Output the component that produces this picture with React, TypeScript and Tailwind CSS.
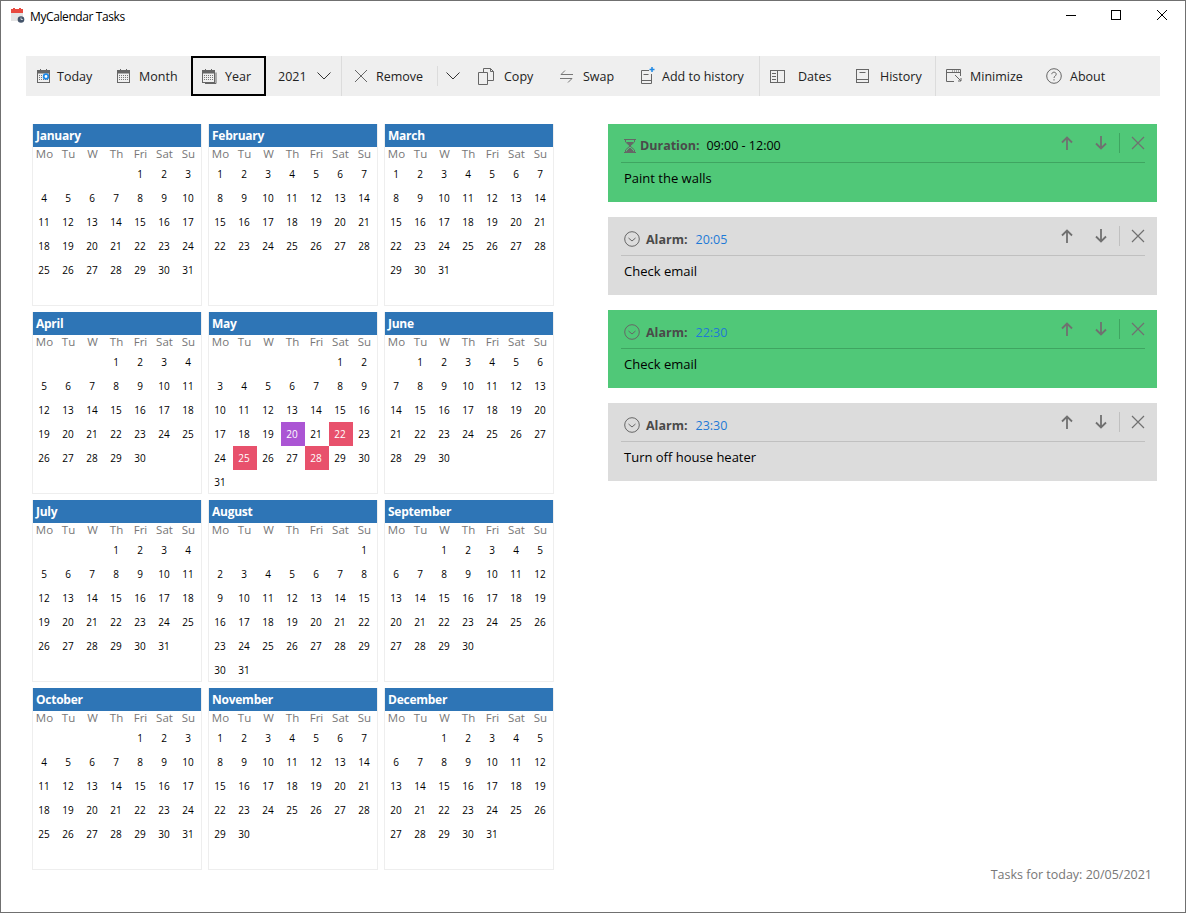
import React from 'react';

const monthsData: [string, number, number][] = [
  ['January', 4, 31], ['February', 0, 28], ['March', 0, 31],
  ['April', 3, 30], ['May', 5, 31], ['June', 1, 30],
  ['July', 3, 31], ['August', 6, 31], ['September', 2, 30],
  ['October', 4, 31], ['November', 0, 30], ['December', 2, 31],
];
const weekdays = ['Mo', 'Tu', 'W', 'Th', 'Fri', 'Sat', 'Su'];

const MonthCard: React.FC<{ name: string; offset: number; days: number }> = ({ name, offset, days }) => {
  const cells: (number | null)[] = [...Array(offset).fill(null), ...Array.from({ length: days }, (_, i) => i + 1)];
  return (
    <div className="w-[170px] h-[182px] border-x border-b border-[#eeeeee] overflow-hidden">
      <div className="h-[23px] bg-[#2e75b6] text-white font-bold text-[12px] tracking-[-0.25px] leading-[24px] pl-[3px]">{name}</div>
      <div className="grid grid-cols-[repeat(7,24px)] h-[15px]">
        {weekdays.map((w) => (
          <div key={w} className="text-center pr-[1px] text-[11.5px] leading-[14px] text-[#777777]">{w}</div>
        ))}
      </div>
      <div className="grid grid-cols-[repeat(7,24px)] auto-rows-[24px]">
        {cells.map((d, i) => {
          let color = 'text-black';
          if (name === 'May' && d === 20) color = 'bg-[#ab55d4] text-white';
          if (name === 'May' && (d === 22 || d === 25 || d === 28)) color = 'bg-[#e8516c] text-white';
          return (
            <div key={i} className={`text-center pr-[2px] text-[10px] leading-[24px] ${color}`}>{d}</div>
          );
        })}
      </div>
    </div>
  );
};

const CalIcon: React.FC<{ kind: 'today' | 'month' | 'year' }> = ({ kind }) => (
  <svg width="16" height="16" viewBox="0 0 16 16" fill="none" stroke="#666" className="shrink-0">
    <rect x="1.5" y="2.5" width="12" height="12" />
    <path d="M1.5 4h12" strokeWidth="3" />
    <path d="M4.5 1v2M10.5 1v2" />
    <path d="M3 7.5h9M3 9.5h9M3 11.5h9" stroke="#777" strokeDasharray="1 1" />
    {kind === 'year' && <path d="M15 4.5v11H4" />}
    {kind === 'today' && <circle cx="10" cy="8.5" r="2.3" stroke="#1e88e5" strokeWidth="1.8" fill="#fff" />}
  </svg>
);

const Chevron = () => (
  <svg width="14" height="8" viewBox="0 0 14 8" fill="none" stroke="#333" className="shrink-0">
    <path d="M.5.5 7 7l6.5-6.5" />
  </svg>
);

const Item: React.FC<{ className: string; icon?: React.ReactNode; label: string; gap: string }> = ({ className, icon, label, gap }) => (
  <div className={`flex items-center h-full ${className}`}>
    {icon}
    <span className={`pt-[2px] ${gap}`}>{label}</span>
  </div>
);

const Divider = () => <div className="w-px h-full bg-[#dcdcdc] shrink-0" />;

const TaskCard: React.FC<{ green?: boolean; kind: 'Duration:' | 'Alarm:'; time: string; text: string }> = ({ green, kind, time, text }) => (
  <div className={`h-[78px] pl-[13px] pr-[12px] pt-[9px] ${green ? 'bg-[#50c878]' : 'bg-[#dcdcdc]'}`}>
    <div className={`h-[30px] pb-[2px] flex items-center border-b ${green ? 'border-[#3fa561]' : 'border-[#c0c0c0]'}`}>
      {kind === 'Duration:' ? (
        <svg width="12" height="14" viewBox="0 0 12 14" fill="none" stroke="#666" className="ml-[3px] mb-[2px]">
          <path d="M0 .5h12M0 13.5h12M1.5 1v2L6 7l-4.5 4v2M10.5 1v2L6 7l4.5 4v2" />
          <path d="M2.5 12.5 6 9l3.5 3.5zM3 3.5h6L6 6.500z" fill="#666" />
        </svg>
      ) : (
        <svg width="16" height="16" viewBox="0 0 16 16" fill="none" stroke="#666" className="ml-[3px] mb-[2px]">
          <circle cx="8" cy="8" r="7.3" />
          <path d="M4.5 7 8 10l3.5-3" />
        </svg>
      )}
      <span className={`font-bold text-[#4a4a4a] text-[12.5px] ${kind === 'Duration:' ? 'ml-[4px]' : 'ml-[6px] pt-[2px]'}`}>{kind}</span>
      <span className={`text-[12.5px] ${kind === 'Duration:' ? 'ml-[7px] text-black' : 'ml-[8px] pt-[2px] text-[#1e7ad6]'}`}>{time}</span>
      <div className="ml-auto self-start flex items-center h-[20px] text-[#707070]">
        <svg width="12" height="14" viewBox="0 0 12 14" fill="none" stroke="currentColor" strokeWidth="1.8">
          <path d="M6 14V1.5M1 6.5l5-5 5 5" />
        </svg>
        <svg width="12" height="14" viewBox="0 0 12 14" fill="none" stroke="currentColor" strokeWidth="1.8" className="ml-[22px]">
          <path d="M6 0v12.5M1 7.5l5 5 5-5" />
        </svg>
        <div className={`w-px h-[20px] ml-[12px] ${green ? 'bg-[#3fa561]' : 'bg-[#c0c0c0]'}`} />
        <svg width="14" height="14" viewBox="0 0 14 14" fill="none" stroke="currentColor" strokeWidth="1.2" className="ml-[11px]">
          <path d="M1 1l12 12M13 1 1 13" />
        </svg>
      </div>
    </div>
    <div className="pl-[3px] mt-[5px] text-[13px] leading-[20px] text-black">{text}</div>
  </div>
);

export default function App() {
  return (
    <div className="w-[1186px] h-[913px] border border-[#707070] bg-white text-[12.5px] text-[#222] flex flex-col overflow-hidden" style={{ fontFamily: '"Open Sans", sans-serif' }}>
      {/* title bar */}
      <div className="h-[55px] shrink-0 flex items-start">
        <svg width="14" height="16" viewBox="0 0 14 16" className="ml-[10px] mt-[6px] shrink-0">
          <rect x="0" y="6" width="12" height="8" fill="#e4e4e4" />
          <rect x="0" y="2" width="12" height="4" fill="#e8493f" />
          <path d="M2 1h2v2H2zM8 1h2v2H8z" fill="#e8493f" />
          <circle cx="10" cy="12.5" r="3.3" fill="#44546a" />
          <path d="M10 10.5v2h1.8" stroke="#fff" strokeWidth=".7" fill="none" />
        </svg>
        <span className="ml-[5px] mt-[7px] text-[12px] tracking-[-0.4px] leading-[18px] text-black">MyCalendar Tasks</span>
        <div className="ml-auto flex items-start mt-[9px] mr-[18px]">
          <div className="w-[10px] h-px bg-black mt-[5px]" />
          <div className="w-[10px] h-[10px] border border-black ml-[35px]" />
          <svg width="10" height="10" viewBox="0 0 10 10" stroke="#000" className="ml-[36px]">
            <path d="M0 0l10 10M10 0 0 10" />
          </svg>
        </div>
      </div>

      {/* toolbar */}
      <div className="h-[40px] shrink-0 ml-[25px] mr-[25px] bg-[#efefef] flex items-center">
        <Item className="w-[80px] pl-[10px]" icon={<CalIcon kind="today" />} gap="ml-[5px]" label="Today" />
        <Item className="w-[85px] pl-[10px]" icon={<CalIcon kind="month" />} gap="ml-[7px]" label="Month" />
        <Item className="w-[75px] pl-[8px] border-2 border-black" icon={<CalIcon kind="year" />} gap="ml-[8px]" label="Year" />
        <div className="w-[75px] h-full flex items-center pl-[12px]">
          <span className="pt-[2px]">2021</span>
          <span className="ml-[10px]"><Chevron /></span>
        </div>
        <Divider />
        <Item
          className="w-[95px] pl-[12px]"
          icon={
            <svg width="14" height="14" viewBox="0 0 14 14" fill="none" stroke="#666">
              <path d="M1 1l12 12M13 1 1 13" />
            </svg>
          }
          gap="ml-[8px]"
          label="Remove"
        />
        <div className="w-px h-[20px] bg-[#dcdcdc] shrink-0" />
        <div className="w-[39px] h-full flex items-center pl-[8px]">
          <Chevron />
        </div>
        <Item
          className="w-[83px]"
          icon={
            <svg width="18" height="18" viewBox="0 0 18 18" fill="none" stroke="#666">
              <path d="M1.5 5.5h9v12h-9zM6.5 5V1.500h7l3 3v9h-6" />
              <path d="M13.5 1.5v3h3" />
            </svg>
          }
          gap="ml-[9px]"
          label="Copy"
        />
        <Item
          className="w-[80px]"
          icon={
            <svg width="13" height="15" viewBox="0 0 13 15" fill="none" stroke="#777">
              <path d="M13 5.5H1l4-4M0 9.5h12l-4 4" />
            </svg>
          }
          gap="ml-[10px]"
          label="Swap"
        />
        <Item
          className="w-[119px]"
          icon={
            <svg width="15" height="18" viewBox="0 0 15 18" fill="none" stroke="#666">
              <path d="M9 3.5H1.500v13h10V7M1.500 13.500h10M3.500 7.500h5" />
              <path d="M12 0v5M9.500 2.500h5" stroke="#1e88e5" strokeWidth="1.5" />
            </svg>
          }
          gap="ml-[7px]"
          label="Add to history"
        />
        <Divider />
        <Item
          className="w-[96px] pl-[10px]"
          icon={
            <svg width="15" height="13" viewBox="0 0 15 13" fill="none" stroke="#666">
              <rect x=".5" y=".5" width="14" height="12" />
              <path d="M7.5 .5v12M2 3.500h4M2 6.500h4M2 9.500h4" />
            </svg>
          }
          gap="ml-[13px]"
          label="Dates"
        />
        <Item
          className="w-[79px]"
          icon={
            <svg width="13" height="14" viewBox="0 0 13 14" fill="none" stroke="#666">
              <rect x=".5" y=".5" width="12" height="13" />
              <path d="M.5 10.500h12M3.500 3.500h6" />
            </svg>
          }
          gap="ml-[11px]"
          label="History"
        />
        <Divider />
        <Item
          className="w-[110px] pl-[10px]"
          icon={
            <svg width="16" height="14" viewBox="0 0 16 14" fill="none" stroke="#666">
              <path d="M14.500 7V.5H.5v12H8M.5 3.500h14" />
              <path d="M6 2h7" strokeDasharray="1 1" />
              <path d="M9 6l6 6M15 9v3h-3" />
            </svg>
          }
          gap="ml-[8px]"
          label="Minimize"
        />
        <Item
          className="flex-1"
          icon={
            <svg width="16" height="16" viewBox="0 0 16 16" fill="none" stroke="#666">
              <circle cx="8" cy="8" r="7.3" />
              <path d="M5.800 6.200C5.800 3.500 10.200 3.500 10.200 6.200 10.200 8 8 8 8 10M8 11.200v1.300" />
            </svg>
          }
          gap="ml-[8px]"
          label="About"
        />
      </div>

      {/* body */}
      <div className="flex-1 flex pt-[28px] pl-[31px] pr-[28px] pb-[27px]">
        <div className="grid grid-cols-[repeat(3,170px)] auto-rows-[182px] gap-[6px] content-start shrink-0">
          {monthsData.map(([n, o, d]) => (
            <MonthCard key={n} name={n} offset={o} days={d} />
          ))}
        </div>
        <div className="flex-1 ml-[54px] flex flex-col">
          <div className="flex flex-col gap-[15px]">
            <TaskCard green kind="Duration:" time="09:00 - 12:00" text="Paint the walls" />
            <TaskCard kind="Alarm:" time="20:05" text="Check email" />
            <TaskCard green kind="Alarm:" time="22:30" text="Check email" />
            <TaskCard kind="Alarm:" time="23:30" text="Turn off house heater" />
          </div>
          <div className="mt-auto text-right pr-[5px] text-[12.5px] text-[#777777]">Tasks for today: 20/05/2021</div>
        </div>
      </div>
    </div>
  );
}
